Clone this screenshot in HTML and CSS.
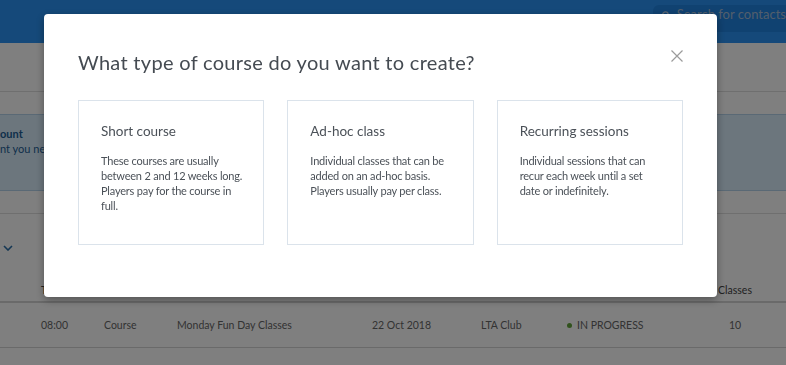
FILE: index.html
```html
<!DOCTYPE html>
<html lang="en">
<head>
    <meta charset="UTF-8">
    <meta name="viewport" content="width=device-width, initial-scale=1.0">
    <title>Courses</title>
    <link rel="stylesheet" href="styles.css">
</head>
<body>
    <header class="topbar">
        <div class="search">
            <svg width="9" height="9" viewBox="0 0 10 10"><circle cx="4" cy="4" r="3.2" fill="none" stroke="#b9cde2" stroke-width="1.4"/><path d="M6.4 6.4L9.3 9.3" stroke="#b9cde2" stroke-width="1.4"/></svg>
            <span>Search for contacts</span>
        </div>
    </header>

    <section class="toolbar"></section>

    <section class="notice">
        <p class="notice-title">ount</p>
        <p>nt you need to get started</p>
    </section>

    <section class="filters">
        <svg class="chevron" width="10" height="6" viewBox="0 0 10 6"><path d="M1 1l4 4 4-4" fill="none" stroke="#2a6fa8" stroke-width="1.6"/></svg>
    </section>

    <section class="table">
        <div class="row head">
            <span>Time</span><span>Type</span><span>Name</span><span>Date</span><span>Venue</span><span>Status</span><span class="num">Classes</span>
        </div>
        <div class="row">
            <span>08:00</span><span>Course</span><span>Monday Fun Day Classes</span><span>22 Oct 2018</span><span>LTA Club</span><span class="status"><i class="dot"></i>IN PROGRESS</span><span class="num">10</span>
        </div>
        <div class="row">
            <span>10:00</span><span>Course</span><span>Monday Fun Day</span><span>22 Oct 2018</span><span>LTA Club</span><span class="status"><i class="dot"></i>IN PROGRESS</span><span class="num">4</span>
        </div>
    </section>

    <!-- modal over the page -->
    <div class="backdrop">
        <div class="modal">
            <div class="modal-head">
                <h1>What type of course do you want to create?</h1>
                <svg class="close" width="12" height="12" viewBox="0 0 12 12"><path d="M0.5 0.5l11 11M11.5 0.5l-11 11" stroke="#9b9b9b" stroke-width="1.2"/></svg>
            </div>
            <div class="cards">
                <div class="card">
                    <h2>Short course</h2>
                    <p>These courses are usually between 2 and 12 weeks long. Players pay for the course in full.</p>
                </div>
                <div class="card">
                    <h2>Ad-hoc class</h2>
                    <p>Individual classes that can be added on an ad-hoc basis. Players usually pay per class.</p>
                </div>
                <div class="card">
                    <h2>Recurring sessions</h2>
                    <p>Individual sessions that can recur each week until a set date or indefinitely.</p>
                </div>
            </div>
        </div>
    </div>
</body>
</html>
```

FILE: styles.css
```css
* {
    padding: 0;
    margin: 0;
    box-sizing: border-box;
}
body {
    font-family: Lato, "Open Sans", sans-serif;
    color: #555;
    background-color: #fff;
    width: 786px;
    height: 365px;
    overflow: hidden;
}
.topbar {
    height: 43px;
    background-color: #2a93f4;
    display: flex;
    justify-content: flex-end;
    padding-top: 5px;
}
.search {
    width: 133px;
    height: 27px;
    background-color: #2184e2;
    border-radius: 6px 0 0 6px;
    display: flex;
    align-items: flex-start;
    gap: 6px;
    padding: 2px 0 0 9px;
    font-size: 13px;
    line-height: 15px;
    color: #a4bdd8;
    white-space: nowrap;
    overflow: hidden;
}
.search svg {
    margin-top: 4px;
}
.toolbar {
    height: 49px;
    border-bottom: 1px solid #dedede;
}
.notice {
    margin-top: 22px;
    height: 77px;
    background-color: #d8ecfa;
    border-top: 1px solid #b4d2ea;
    border-bottom: 1px solid #b4d2ea;
    padding-top: 11px;
    color: #1e5f96;
    font-size: 11px;
    line-height: 15px;
}
.notice-title {
    font-weight: bold;
}
.filters {
    margin-top: 22px;
    border-top: 1px solid #dedede;
    height: 66px;
    padding: 31px 0 0 3px;
}
.chevron {
    display: block;
}
.table .row {
    display: grid;
    grid-template-columns: 63px 73px 195px 109px 89px 140px 50px;
    padding-left: 41px;
    align-items: center;
    height: 45px;
    border-bottom: 1px solid #d4d4d4;
    font-size: 10.5px;
    color: #666;
}
.table .head {
    height: 24px;
    border-bottom: 2px solid #d4d4d4;
    color: #444;
}
.table .num {
    text-align: center;
}
.status {
    display: flex;
    align-items: center;
    margin-left: -3px;
}
.dot {
    width: 5px;
    height: 5px;
    border-radius: 50%;
    background-color: #62a53a;
    margin-right: 5px;
}
.backdrop {
    position: fixed;
    top: 0;
    left: 0;
    right: 0;
    bottom: 0;
    background-color: rgba(0, 0, 0, 0.5);
    padding: 14px 0 0 44px;
}
.modal {
    width: 673px;
    height: 283px;
    background-color: #fff;
    border-radius: 4px;
    box-shadow: 0 3px 8px rgba(0, 0, 0, 0.35);
    padding: 33px 34px 0 34px;
}
.modal-head {
    display: flex;
    justify-content: space-between;
    align-items: flex-start;
}
.modal-head h1 {
    font-size: 20px;
    font-weight: normal;
    line-height: 30px;
    letter-spacing: 0.3px;
    color: #454b52;
}
.close {
    margin: 3px 0 0 0;
}
.cards {
    display: flex;
    gap: 23px;
    margin-top: 23px;
}
.card {
    width: 187px;
    height: 145px;
    border: 1px solid #dbe3eb;
    padding: 21px 18px 0 22px;
    color: #4b5158;
}
.card h2 {
    font-size: 13.5px;
    font-weight: normal;
    line-height: 18px;
}
.card p {
    margin-top: 13px;
    font-size: 11px;
    line-height: 15px;
    letter-spacing: -0.2px;
}
```
